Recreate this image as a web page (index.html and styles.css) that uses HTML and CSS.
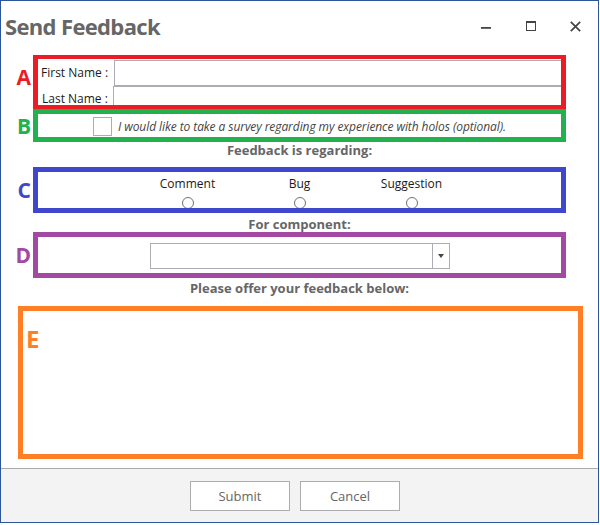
FILE: index.html
```html
<!DOCTYPE html>
<html>
<head>
<meta charset="utf-8">
<title>Send Feedback</title>
<link rel="stylesheet" href="styles.css">
</head>
<body>
<div class="window">
  <div class="titlebar">
    <h1 class="title">Send Feedback</h1>
    <div class="controls">
      <span class="ctl"><svg width="10" height="10" viewBox="0 0 10 10"><rect x="0" y="6" width="10" height="1.8" fill="#444"/></svg></span>
      <span class="ctl"><svg width="10" height="10" viewBox="0 0 10 10"><rect x="0.5" y="0.5" width="9" height="9" fill="none" stroke="#444" stroke-width="1"/><rect x="0" y="0" width="10" height="2" fill="#444"/></svg></span>
      <span class="ctl"><svg width="11" height="11" viewBox="0 0 11 11"><path d="M0.8 0.8 L10.2 10.2 M10.2 0.8 L0.8 10.2" stroke="#444" stroke-width="1.7" fill="none"/></svg></span>
    </div>
  </div>

  <div class="form">
    <div class="tag tag-a">A</div>
    <div class="box box-a">
      <div class="name-row"><label class="name-label">First Name :</label><input class="field" type="text"></div>
      <div class="name-row"><label class="name-label name-label-last">Last Name :</label><input class="field field-last" type="text"></div>
    </div>

    <div class="tag tag-b">B</div>
    <div class="box box-b">
      <span class="check"></span>
      <span class="survey">I would like to take a survey regarding my experience with holos (optional).</span>
    </div>

    <div class="heading heading-1">Feedback is regarding:</div>

    <div class="tag tag-c">C</div>
    <div class="box box-c">
      <div class="option"><span>Comment</span><span class="radio"></span></div>
      <div class="option"><span>Bug</span><span class="radio"></span></div>
      <div class="option"><span>Suggestion</span><span class="radio"></span></div>
    </div>

    <div class="heading heading-2">For component:</div>

    <div class="tag tag-d">D</div>
    <div class="box box-d">
      <div class="select">
        <span class="select-value"></span>
        <span class="select-btn"><svg width="6" height="4" viewBox="0 0 6 4"><path d="M0 0 L6 0 L3 4 Z" fill="#444"/></svg></span>
      </div>
    </div>

    <div class="heading heading-3">Please offer your feedback below:</div>
  </div>

  <div class="feedback-box"><span class="tag-e">E</span></div>

  <div class="footer">
    <button class="btn">Submit</button>
    <button class="btn">Cancel</button>
  </div>
</div>
</body>
</html>
```

FILE: styles.css
```css
* { box-sizing: border-box; }

body {
  margin: 0;
  background: #fff;
  font-family: "Open Sans", "Liberation Sans", sans-serif;
}

.window {
  width: 599px;
  height: 523px;
  border: 1px solid #2b579a;
  display: flex;
  flex-direction: column;
  background: #fff;
}

.titlebar {
  height: 54px;
  flex-shrink: 0;
  display: flex;
  align-items: flex-start;
}

.title {
  margin: 10px 0 0 4px;
  font-size: 22px;
  line-height: 30px;
  font-weight: 700;
  letter-spacing: -0.65px;
  color: #666;
}

.controls {
  margin-left: auto;
  display: flex;
}

.ctl {
  width: 45px;
  height: 50px;
  display: flex;
  align-items: center;
  justify-content: center;
}

.form {
  display: grid;
  grid-template-columns: 32px 533px;
}

.tag {
  display: flex;
  align-items: center;
  justify-content: flex-end;
  padding-right: 2px;
  font-size: 21px;
  font-weight: 700;
  line-height: 24px;
}
.tag-a { color: #ed1c24; padding-bottom: 11px; }
.tag-b { color: #22b14c; }
.tag-c { color: #3f48cc; }
.tag-d { color: #a349a4; }

.box {
  border-style: solid;
  border-width: 5px;
  height: 46px;
  overflow: hidden;
}

.box-a {
  border-color: #ed1c24;
  border-width: 4px 5px 4px 5px;
  height: 54px;
  padding-top: 1px;
}

.name-row {
  display: flex;
  height: 26px;
}

.name-label {
  width: 76px;
  flex-shrink: 0;
  padding-left: 3px;
  font-size: 12px;
  line-height: 26px;
  color: #1a1a1a;
}
.name-label-last { width: 75px; padding-left: 4px; }

.field {
  flex: 1;
  height: 26px;
  margin: 0;
  padding: 0;
  border: 1px solid #abadb3;
  border-right: none;
  background: #fff;
}

.box-b {
  border-color: #22b14c;
  height: 33px;
  display: flex;
  justify-content: center;
  align-items: flex-start;
  padding-top: 3px;
}

.check {
  width: 19px;
  height: 19px;
  border: 1px solid #adadad;
  background: #fff;
  margin-right: 6px;
  flex-shrink: 0;
}

.survey {
  font-style: italic;
  font-size: 12px;
  line-height: 19px;
  letter-spacing: -0.08px;
  color: #444;
  white-space: nowrap;
}

.heading {
  grid-column: 2;
  text-align: center;
  font-size: 13px;
  font-weight: 700;
  line-height: 16px;
  color: #666;
}
.heading-1 { height: 25px; }
.heading-2 { height: 19px; padding-top: 3px; }
.heading-3 { height: 28px; padding-top: 2px; }

.box-c {
  border-color: #3f48cc;
  display: grid;
  grid-template-columns: repeat(3, 112px);
  justify-content: center;
}

.option {
  display: flex;
  flex-direction: column;
  align-items: center;
  padding-top: 3px;
  font-size: 12px;
  line-height: 17px;
  color: #1a1a1a;
}

.radio {
  width: 12px;
  height: 12px;
  margin-top: 5px;
  border: 1px solid #707070;
  border-radius: 50%;
  background: #fff;
}

.box-d {
  border-color: #a349a4;
  display: flex;
  justify-content: center;
  padding-top: 6px;
}

.select {
  width: 300px;
  height: 26px;
  border: 1px solid #abadb3;
  background: #fff;
  display: flex;
}

.select-value { flex: 1; }

.select-btn {
  width: 17px;
  border-left: 1px solid #abadb3;
  display: flex;
  align-items: center;
  justify-content: center;
}

.feedback-box {
  margin-left: 17px;
  width: 565px;
  height: 153px;
  flex-shrink: 0;
  border: 5px solid #ff7f27;
  padding: 16px 0 0 3px;
}

.tag-e {
  display: block;
  font-size: 24px;
  font-weight: 700;
  line-height: 24px;
  color: #ff7f27;
}

.footer {
  margin-top: 9px;
  flex: 1;
  border-top: 1px solid #ababab;
  background: #f3f3f3;
  display: flex;
  align-items: flex-start;
  gap: 10px;
  padding: 12px 0 0 189px;
}

.btn {
  width: 100px;
  height: 30px;
  margin: 0;
  border: 1px solid #adadad;
  background: #fff;
  color: #666;
  font-family: "Open Sans", "Liberation Sans", sans-serif;
  font-size: 13px;
  padding: 0;
}
```
